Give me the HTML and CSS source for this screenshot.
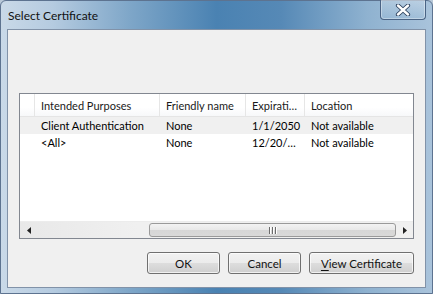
FILE: index.html
```html
<!DOCTYPE html>
<html>
<head>
<meta charset="utf-8">
<link rel="stylesheet" href="styles.css">
</head>
<body>
<div class="window">
  <div class="titlebar">
    <span class="title">Select Certificate</span>
    <div class="close">
      <svg width="16" height="12" viewBox="0 0 16 12">
        <path d="M3 1.5 L13 10.5 M13 1.5 L3 10.5" stroke="#2b3f5c" stroke-width="4.2" stroke-linecap="round" fill="none"/>
        <path d="M3 1.5 L13 10.5 M13 1.5 L3 10.5" stroke="#ffffff" stroke-width="2.4" stroke-linecap="round" fill="none"/>
      </svg>
    </div>
  </div>
  <div class="client">
    <div class="listview">
      <div class="row header">
        <div class="cell c0"></div>
        <div class="cell c1">Intended Purposes</div>
        <div class="cell c2">Friendly name</div>
        <div class="cell c3">Expirati…</div>
        <div class="cell c4">Location</div>
      </div>
      <div class="row item selected">
        <div class="cell c0"></div>
        <div class="cell c1">Client Authentication</div>
        <div class="cell c2">None</div>
        <div class="cell c3">1/1/2050</div>
        <div class="cell c4">Not available</div>
      </div>
      <div class="row item">
        <div class="cell c0"><span class="dot"></span></div>
        <div class="cell c1">&lt;All&gt;</div>
        <div class="cell c2">None</div>
        <div class="cell c3">12/20/…</div>
        <div class="cell c4">Not available</div>
      </div>
      <div class="spacer"></div>
      <div class="hscroll">
        <div class="arrow"><svg width="4" height="7" viewBox="0 0 4 7"><path d="M4 0 L0 3.5 L4 7 Z" fill="#222"/></svg></div>
        <div class="track">
          <div class="thumb"><span class="grip"></span><span class="grip"></span><span class="grip"></span></div>
        </div>
        <div class="arrow"><svg width="4" height="7" viewBox="0 0 4 7"><path d="M0 0 L4 3.5 L0 7 Z" fill="#222"/></svg></div>
      </div>
    </div>
    <div class="buttons">
      <div class="btn ok">OK</div>
      <div class="btn cancel">Cancel</div>
      <div class="btn view"><u>V</u>iew Certificate</div>
    </div>
  </div>
</div>
</body>
</html>
```
FILE: styles.css
```css
* { box-sizing: border-box; }
html, body { margin: 0; padding: 0; }
body {
  width: 433px;
  height: 294px;
  overflow: hidden;
  background: #b8c8d8;
  font-family: "Lato", "Open Sans", sans-serif;
  font-size: 11px;
  color: #000;
}
.window {
  width: 433px;
  height: 294px;
  border-radius: 6px 6px 0 0;
  border: 1px solid #5d7390;
  background: linear-gradient(90deg, #c9d9e8 0%, #b5cbe0 12%, #7ea6c8 30%, #4a82b2 50%, #5689b6 65%, #8fb2d0 85%, #a9c3db 100%);
  display: flex;
  flex-direction: column;
}
.titlebar {
  height: 28px;
  display: flex;
  justify-content: space-between;
  align-items: flex-start;
  flex: none;
}
.title {
  padding: 7px 0 0 7px;
  font-family: "Lato", sans-serif;
  font-size: 12px;
  color: #111;
}
.close {
  width: 46px;
  height: 20px;
  margin: -1px 6px 0 0;
  border: 1px solid #4a6384;
  border-top: none;
  border-radius: 0 0 4px 4px;
  box-shadow: inset 0 0 0 1px rgba(255,255,255,0.35);
  background: linear-gradient(180deg, rgba(255,255,255,0.25), rgba(150,185,215,0.35));
  display: flex;
  align-items: center;
  justify-content: center;
}
.client {
  margin: 0 6px 0 6px;
  height: 259px;
  background: #f0f0f0;
  border: 1px solid #8192a8;
  display: flex;
  flex-direction: column;
  padding: 63px 11px 0 11px;
}
.listview {
  height: 146px;
  background: #fff;
  border: 1px solid #828790;
  display: flex;
  flex-direction: column;
}
.row {
  display: flex;
  flex: none;
}
.header {
  height: 23px;
  align-items: center;
  background: linear-gradient(180deg, #ffffff 0%, #ffffff 60%, #f7f8fa 100%);
  border-bottom: 1px solid #e5e5e5;
  color: #1a1a1a;
}
.header .cell {
  height: 100%;
  display: flex;
  align-items: center;
  border-right: 1px solid #e6e6e6;
  padding-top: 1px;
}
.header .c4 { border-right: none; }
.item {
  height: 17px;
  align-items: center;
}
.selected { background: #f0f0f0; }
.cell {
  padding-left: 6px;
  white-space: nowrap;
  overflow: hidden;
}
.c0 { width: 15px; padding-left: 0; position: relative; }
.c1 { width: 125px; }
.c2 { width: 86px; }
.c3 { width: 59px; }
.c4 { flex: 1; }
.dot {
  position: absolute;
  left: 4px;
  top: 11px;
  width: 2px;
  height: 2px;
  background: #333;
}
.spacer { flex: 1; }
.hscroll {
  height: 17px;
  display: flex;
  align-items: stretch;
  background: linear-gradient(90deg, #e8e8e8, #f0f0f0 30%, #f0f0f0);
  border-top: 1px solid #ececec;
}
.arrow {
  width: 17px;
  display: flex;
  align-items: center;
  justify-content: center;
}
.track {
  flex: 1;
  display: flex;
  justify-content: flex-end;
  padding: 1px 0;
}
.thumb {
  width: 247px;
  border: 1px solid #9a9a9a;
  border-radius: 3px;
  background: linear-gradient(180deg, #f3f3f3 0%, #e8e8e8 50%, #d6d6d6 51%, #d9d9d9 100%);
  display: flex;
  justify-content: center;
  align-items: center;
  gap: 2px;
}
.grip {
  width: 1px;
  height: 7px;
  background: #6b6b6b;
  box-shadow: 1px 0 0 #fff;
}
.buttons {
  display: flex;
  justify-content: flex-end;
  gap: 8px;
  margin-top: 13px;
}
.btn {
  height: 22px;
  border: 1px solid #707070;
  border-radius: 3px;
  background: linear-gradient(180deg, #f2f2f2 0%, #ebebeb 50%, #dddddd 51%, #cfcfcf 100%);
  box-shadow: inset 0 0 0 1px rgba(255,255,255,0.7);
  display: flex;
  align-items: center;
  justify-content: center;
  color: #111;
  font-size: 11.5px;
}
.ok, .cancel { width: 73px; }
.view { width: 105px; }
u { text-decoration: underline; text-underline-offset: 2px; }
```
